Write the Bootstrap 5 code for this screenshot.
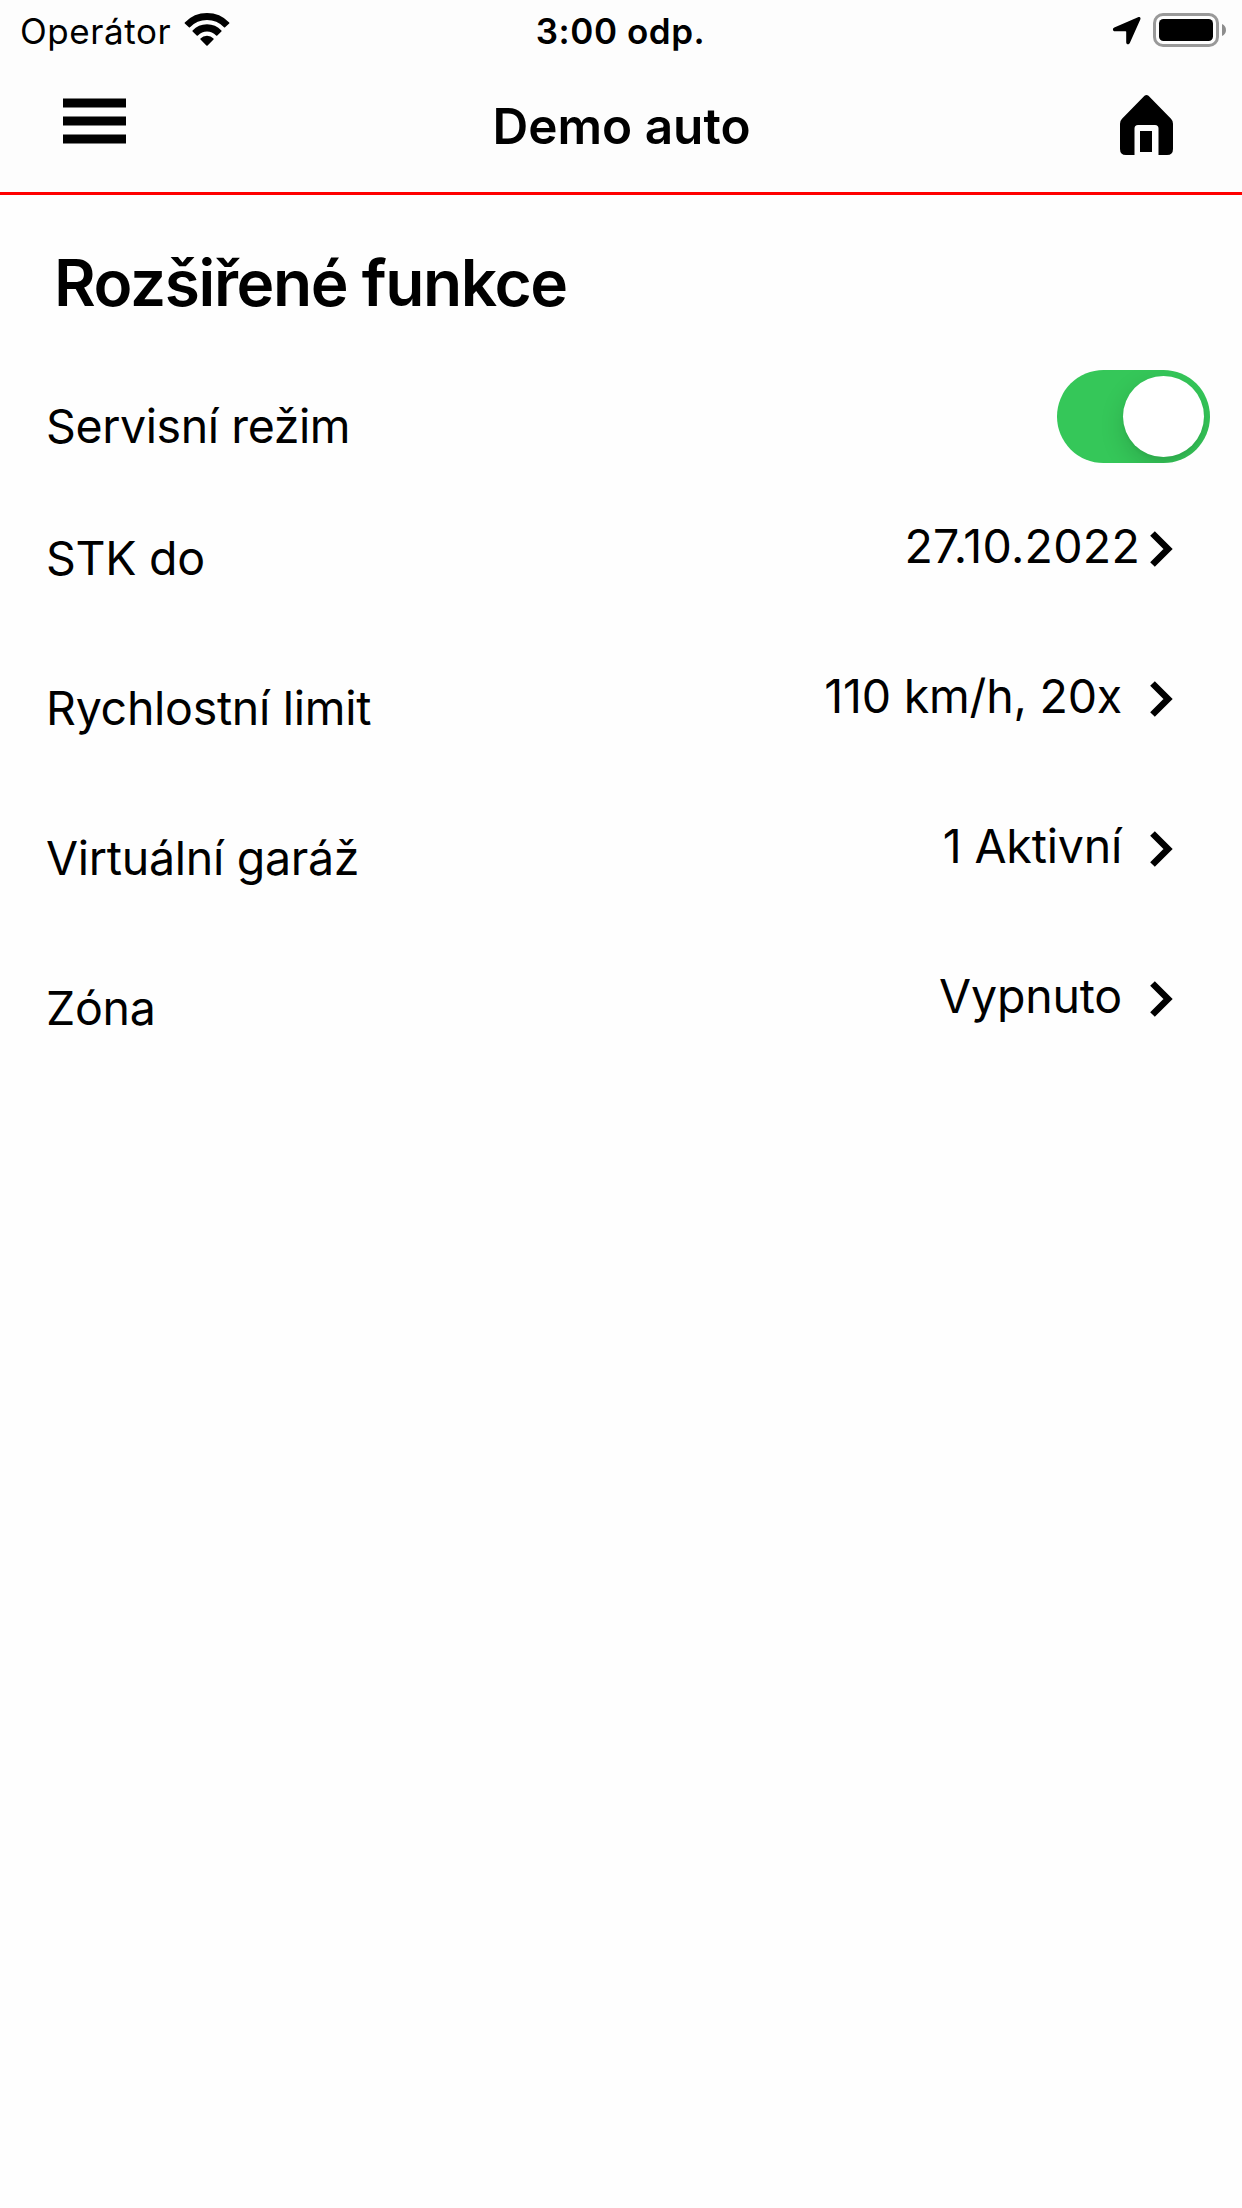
<!DOCTYPE html>
<html lang="cs">
<head>
<meta charset="utf-8">
<meta name="viewport" content="width=device-width, initial-scale=1">
<title>Demo auto</title>
<link href="https://cdn.jsdelivr.net/npm/bootstrap@5.3.0/dist/css/bootstrap.min.css" rel="stylesheet">
<style>
body{font-family:Inter,"Noto Sans",sans-serif;color:#000;background:#fefefe;min-height:2208px}
svg{display:block;flex:none}
.app-head{background:#fdfdfd;border-bottom:3px solid #f00;height:195px}
.status-bar{height:62px;font-size:35px;line-height:62px;letter-spacing:.56px;padding:0 16px 0 20px}
.side{flex:1 1 0}
.clock{margin-right:5px}
.status-bar .wifi{margin:13px 0 0 13px}
.status-bar .locate{margin:16px 12px 0 0}
.status-bar .battery{margin-top:13px}
.title-bar{height:130px;padding:0 69px 0 63px}
.title-bar .home{margin-top:33px}
.title-bar .burger{margin-top:36px}
.app-title{font-size:49.5px;line-height:60px;margin:34px 0 0;padding-left:7px}
.page-title{font-size:64px;line-height:80px;letter-spacing:-1.4px;margin:48px 0 0 54px}
.rows{padding-left:46px}
.setting{height:150px;padding-right:69px;font-size:46.5px;line-height:60px}
.setting.first{height:132px;padding-right:32px}
.lbl{padding-top:73px;letter-spacing:-.28px}
.first .lbl{letter-spacing:-.4px}
.val{padding-top:61px;letter-spacing:-.2px}
.val.date{letter-spacing:.25px}
.val span{margin-right:28px}
.val.date span{margin-right:10px}
.val svg{margin-top:15px}
.toggle{width:153px;height:93px;border-radius:47px;background:#35c759;padding:6px;margin-top:47px;overflow:hidden}
.knob{width:81px;height:81px;background:#fff;box-shadow:0 9px 24px rgba(0,0,0,.15),0 3px 3px rgba(0,0,0,.04)}
</style>
</head>
<body>
<header class="app-head">
  <div class="status-bar d-flex align-items-start">
    <div class="side d-flex"><span class="carrier">Operátor</span>
      <svg class="wifi" width="46" height="34" viewBox="0 0 46 34"><path d="M.8 9.4Q10 0 23 0T45.2 9.4Q45.7 10 45.2 10.5L41.1 14.3Q40.6 14.8 40 14.3Q33 7.1 23 7.1T6 14.3Q5.4 14.8 4.9 14.3L.8 10.5Q.3 10 .8 9.4Z"/><path d="M8.6 17.4Q14.4 11.2 23 11.2T37.4 17.4Q37.9 18 37.4 18.5L33.3 22.4Q32.7 22.9 32.1 22.4Q28.2 18.6 23 18.6T13.9 22.4Q13.3 22.9 12.7 22.4L8.6 18.5Q8.1 18 8.6 17.4Z"/><path d="M16.5 25.4Q19 22.8 23 22.8T29.5 25.4Q30 26 29.5 26.5L23.6 32.5Q23 33 22.4 32.5L16.5 26.5Q16 26 16.5 25.4Z"/></svg>
    </div>
    <div class="clock fw-semibold">3:00 odp.</div>
    <div class="side d-flex justify-content-end">
      <svg class="locate" width="29" height="29" viewBox="0 0 29 29"><path d="M26 1.2C27.8.4 29 1.6 28.3 3.4L17.8 27C16.8 29.2 14.2 28.6 14.2 26.2V15.8Q14.2 15.2 13.6 15.2H3C.6 15.2.2 12.5 2.3 11.5Z"/></svg>
      <svg class="battery" width="73" height="34" viewBox="0 0 73 34"><rect x="1.5" y="1.5" width="63" height="31" rx="8.5" fill="none" stroke="#999" stroke-width="3"/><rect x="6" y="6" width="54" height="22" rx="4.5"/><path d="M69 11C74.3 12.8 74.3 21.2 69 23Z" fill="#8d8d8d"/></svg>
    </div>
  </div>
  <nav class="title-bar d-flex align-items-start">
    <div class="side"><svg class="burger" width="63" height="46" viewBox="0 0 63 46"><path d="M0 .5h63v9H0zM0 18.5h63v9H0zM0 36.5h63v9H0z"/></svg></div>
    <h1 class="app-title fw-semibold">Demo auto</h1>
    <div class="side d-flex justify-content-end"><svg class="home" width="53" height="60" viewBox="0 0 53 60"><path fill-rule="evenodd" d="M24.5.8Q26.5-.8 28.5.8L51 23.7Q53 25.7 53 28.7V54Q53 60 47 60H38.5V33.5Q38.5 30 35 30H18Q14.5 30 14.5 33.5V60H6Q0 60 0 54V28.7Q0 25.7 2 23.7Z"/><path d="M20 36h12v21H20z"/></svg></div>
  </nav>
</header>
<main>
  <h2 class="page-title fw-semibold">Rozšiřené funkce</h2>
  <div class="rows">
    <div class="setting first d-flex justify-content-between align-items-start">
      <div class="lbl">Servisní režim</div>
      <div class="toggle d-flex justify-content-end" role="switch" aria-checked="true"><div class="knob rounded-circle"></div></div>
    </div>
    <div class="setting d-flex justify-content-between align-items-start">
      <div class="lbl">STK do</div>
      <div class="val date d-flex"><span>27.10.2022</span><svg width="23" height="36" viewBox="0 0 23 36"><path d="M2.5 2.5L18 18 2.5 33.5" fill="none" stroke="#000" stroke-width="6.6"/></svg></div>
    </div>
    <div class="setting d-flex justify-content-between align-items-start">
      <div class="lbl">Rychlostní limit</div>
      <div class="val d-flex"><span>110 km/h, 20x</span><svg width="23" height="36" viewBox="0 0 23 36"><path d="M2.5 2.5L18 18 2.5 33.5" fill="none" stroke="#000" stroke-width="6.6"/></svg></div>
    </div>
    <div class="setting d-flex justify-content-between align-items-start">
      <div class="lbl">Virtuální garáž</div>
      <div class="val d-flex"><span>1 Aktivní</span><svg width="23" height="36" viewBox="0 0 23 36"><path d="M2.5 2.5L18 18 2.5 33.5" fill="none" stroke="#000" stroke-width="6.6"/></svg></div>
    </div>
    <div class="setting d-flex justify-content-between align-items-start">
      <div class="lbl">Zóna</div>
      <div class="val d-flex"><span>Vypnuto</span><svg width="23" height="36" viewBox="0 0 23 36"><path d="M2.5 2.5L18 18 2.5 33.5" fill="none" stroke="#000" stroke-width="6.6"/></svg></div>
    </div>
  </div>
</main>
<script src="https://cdn.jsdelivr.net/npm/bootstrap@5.3.0/dist/js/bootstrap.bundle.min.js"></script>
</body>
</html>
